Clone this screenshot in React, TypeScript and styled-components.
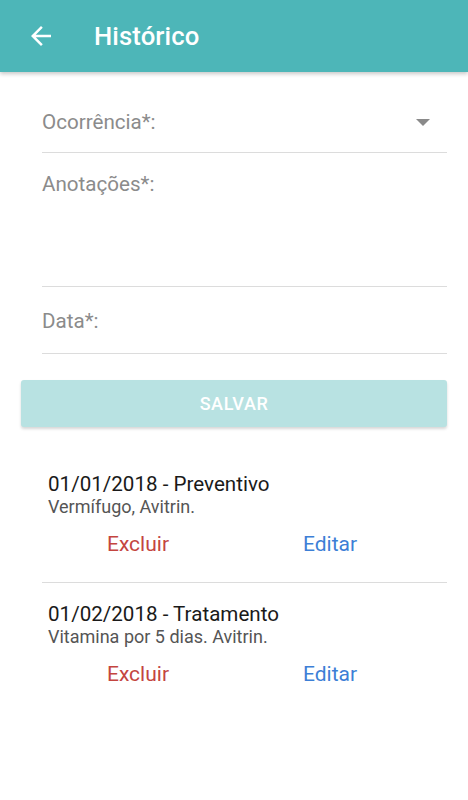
import React from "react";
import styled, { createGlobalStyle } from "styled-components";
import { MdArrowBack } from "react-icons/md";

const GlobalStyle = createGlobalStyle`
  body {
    margin: 0;
    background: #fff;
    font-family: Roboto, "Noto Sans", Arial, sans-serif;
  }
`;

const historico = [
  {
    id: 1,
    title: "01/01/2018 - Preventivo",
    notes: "Vermífugo, Avitrin.",
  },
  {
    id: 2,
    title: "01/02/2018 - Tratamento",
    notes: "Vitamina por 5 dias. Avitrin.",
  },
];

export default function App() {
  return (
    <>
      <GlobalStyle />
      <Page>
        <Header>
          <BackButton>
            <MdArrowBack size={30} />
          </BackButton>
          <Title>Histórico</Title>
        </Header>

        <Form>
          <Field $pt={28} $height={52}>
            <SelectRow>
              <Label>Ocorrência*:</Label>
              <Caret />
            </SelectRow>
          </Field>
          <Field $pt={9} $height={124}>
            <Label>Anotações*:</Label>
          </Field>
          <Field $pt={12} $height={54}>
            <Label>Data*:</Label>
          </Field>
          <SaveButton disabled>SALVAR</SaveButton>
        </Form>

        <List>
          {historico.map((item, i) => (
            <Item key={item.id} $last={i === historico.length - 1}>
              <ItemTitle>{item.title}</ItemTitle>
              <ItemNotes>{item.notes}</ItemNotes>
              <Actions>
                <ActionButton $color="#c4453f">Excluir</ActionButton>
                <ActionButton $color="#3d7fd6">Editar</ActionButton>
              </Actions>
            </Item>
          ))}
        </List>
      </Page>
    </>
  );
}

const Page = styled.div`
  width: 468px;
  min-height: 800px;
  background: #fff;
`;

const Header = styled.header`
  display: flex;
  align-items: center;
  height: 72px;
  background-color: #4db6b8;
  box-shadow: 0 2px 4px rgba(0, 0, 0, 0.22);
  color: #fff;
`;

const BackButton = styled.div`
  display: flex;
  align-items: center;
  margin-left: 26px;
  width: 30px;
  height: 30px;
`;

const Title = styled.h1`
  margin: 0 0 0 38px;
  font-size: 25.7px;
  font-weight: 500;
  letter-spacing: 0.1px;
`;

const Form = styled.div`
  display: flex;
  flex-direction: column;
  padding: 0 21px;
`;

const Field = styled.div<{ $pt: number; $height: number }>`
  margin-left: 21px;
  padding-top: ${(p) => p.$pt}px;
  height: ${(p) => p.$height}px;
  border-bottom: 1px solid #dcdcdc;
`;

const SelectRow = styled.div`
  display: flex;
  align-items: center;
  justify-content: space-between;
  padding-right: 17px;
`;

const Label = styled.div`
  font-size: 20.6px;
  line-height: 44px;
  color: #8b8b8b;
`;

const Caret = styled.span`
  width: 0;
  height: 0;
  border-left: 7px solid transparent;
  border-right: 7px solid transparent;
  border-top: 7px solid #8a8a8a;
`;

const SaveButton = styled.button`
  margin-top: 26px;
  height: 47px;
  border: none;
  border-radius: 3px;
  background: #b8e2e2;
  color: #fff;
  font-family: Roboto, Arial, sans-serif;
  font-size: 18px;
  font-weight: 500;
  letter-spacing: 0.6px;
  box-shadow: 0 2px 3px rgba(0, 0, 0, 0.16);
`;

const List = styled.div`
  margin: 40px 21px 0 42px;
`;

const Item = styled.div<{ $last: boolean }>`
  padding: 4px 0 ${(p) => (p.$last ? 0 : 20)}px 6px;
  border-bottom: ${(p) => (p.$last ? "none" : "1px solid #dcdcdc")};
  & + & {
    padding-top: 18px;
  }
`;

const ItemTitle = styled.div`
  font-size: 20.6px;
  line-height: 26px;
  color: #1a1a1a;
`;

const ItemNotes = styled.div`
  font-size: 18px;
  line-height: 20px;
  color: #555;
`;

const Actions = styled.div`
  display: flex;
  margin: 9px 0 0 -6px;
`;

const ActionButton = styled.div<{ $color: string }>`
  width: 192px;
  text-align: center;
  font-size: 21px;
  line-height: 36px;
  color: ${(p) => p.$color};
`;
